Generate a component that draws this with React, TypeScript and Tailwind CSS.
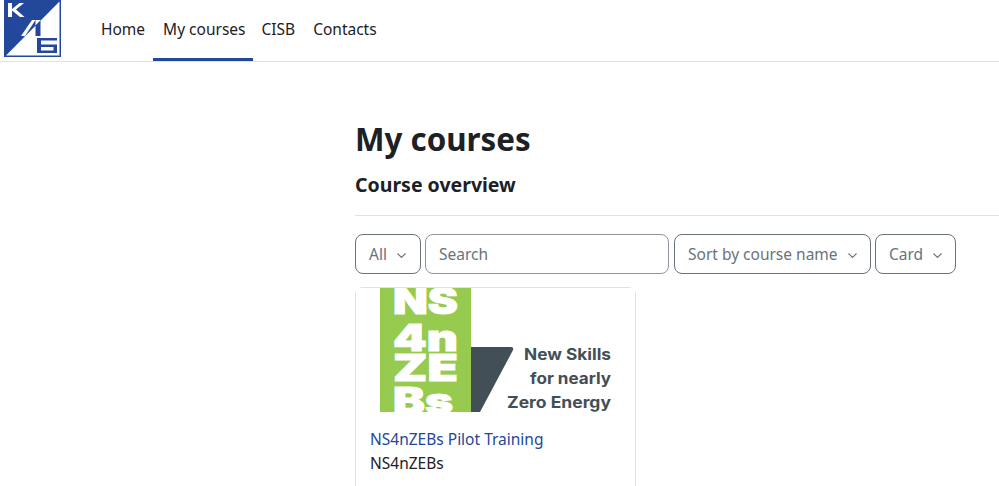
const Chevron = () => (
  <svg width="9" height="5" viewBox="0 0 9 5" fill="none" stroke="currentColor" strokeWidth="1.1" className="ml-[10px]">
    <path d="M.5.5l4 4 4-4" />
  </svg>
);

const FilterButton = ({ label, className }: { label: string; className: string }) => (
  <div className={`flex h-10 items-center rounded-lg border border-[#6a737b] pt-[2px] pl-[13px] text-[#6a737b] ${className}`}>
    {label}
    <Chevron />
  </div>
);

const Logo = () => (
  <svg width="57" height="57" viewBox="0 0 57 57" className="shrink-0">
    <rect width="57" height="57" fill="#23479b" />
    <path d="M55.500 1.500V55.500H2Z" fill="#fff" />
    {/* K */}
    <path d="M4 3h4v6L15.500 3H20l-8 6.500L20.500 17H16l-8-6.500V17H4z" fill="#fff" />
    {/* I with the stem crossing the diagonal */}
    <path d="M17 36l11-16h3.500L21 36z" fill="#fff" />
    <path d="M31.500 20h5v.500l-5 5z" fill="#fff" />
    <path d="M36.500 20.500V36h-5V25.500z" fill="#23479b" />
    {/* B */}
    <path fillRule="evenodd" d="M33 38h20v2.500H37v4h16V53H33zM37 47v3.500h12.500V47z" fill="#23479b" />
  </svg>
);

const CourseImage = () => (
  <svg width="279" height="124" viewBox="0 0 279 124" className="block">
    <rect width="279" height="124" fill="#fff" />
    <rect x="24" width="91" height="124" fill="#96cb4f" />
    <path d="M115 59H155Q158 59 157 62L124 124H115Z" fill="#434f57" />
    <g fontFamily="Inter, sans-serif" fontWeight="900" fill="#fff" stroke="#fff" strokeWidth="1" fontSize="37">
      <text x="37" y="26" textLength="65" lengthAdjust="spacingAndGlyphs">NS</text>
      <text x="37" y="63" textLength="65" lengthAdjust="spacingAndGlyphs">4n</text>
      <text x="37" y="93" textLength="65" lengthAdjust="spacingAndGlyphs">ZE</text>
      <text x="37" y="126" textLength="60" lengthAdjust="spacingAndGlyphs">Bs</text>
    </g>
    <g fontFamily="Inter, sans-serif" fontWeight="700" fontSize="15.500" fill="#434f57">
      <text x="168" y="72" textLength="87" lengthAdjust="spacingAndGlyphs">New Skills</text>
      <text x="174" y="96" textLength="81" lengthAdjust="spacingAndGlyphs">for nearly</text>
      <text x="151" y="120" textLength="104" lengthAdjust="spacingAndGlyphs">Zero Energy</text>
    </g>
  </svg>
);

export default function App() {
  return (
    <div className="h-[486px] w-[999px] overflow-hidden bg-white font-['Noto_Sans',sans-serif] text-[15.5px] text-[#1d2125]">
      <nav className="flex h-[62px] items-start border-b border-[#dee2e6] pl-1">
        <Logo />
        <div className="ml-[32px] flex h-[61px] items-stretch">
          <a className="flex items-center border-b-[3px] border-transparent pt-[2px] pr-[8px] pl-[8px]">Home</a>
          <a className="flex items-center border-b-[3px] border-[#23479b] pt-[2px] pr-[7px] pl-[10px]">My courses</a>
          <a className="flex items-center border-b-[3px] border-transparent pt-[2px] pr-[9px] pl-[9px]">CISB</a>
          <a className="flex items-center border-b-[3px] border-transparent pt-[2px] px-[9px]">Contacts</a>
        </div>
      </nav>
      <main className="pl-[355px]">
        <h1 className="mt-[53px] text-[31.3px] leading-[48px] font-bold">My courses</h1>
        <h2 className="mt-[7px] text-[19.500px] leading-[30px] font-bold">Course overview</h2>
        <hr className="mt-[15px] border-[#dee2e6]" />
        <div className="mt-[18px] flex gap-1">
          <FilterButton label="All" className="w-[66px]" />
          <div className="mr-px flex h-10 w-[244px] items-center rounded-lg border border-[#8f959e] pt-[2px] pl-[13px] text-[#6a737b]">Search</div>
          <FilterButton label="Sort by course name" className="w-[197px]" />
          <FilterButton label="Card" className="w-[81px]" />
        </div>
        <div className="mt-[13px] h-[220px] w-[281px] rounded-t-lg border border-b-0 border-[#dee2e6]">
          <CourseImage />
          <div className="px-[14px] pt-[15px] leading-[24px]">
            <a className="block text-[#23479b]">NS4nZEBs Pilot Training</a>
            <div>NS4nZEBs</div>
          </div>
        </div>
      </main>
    </div>
  );
}
